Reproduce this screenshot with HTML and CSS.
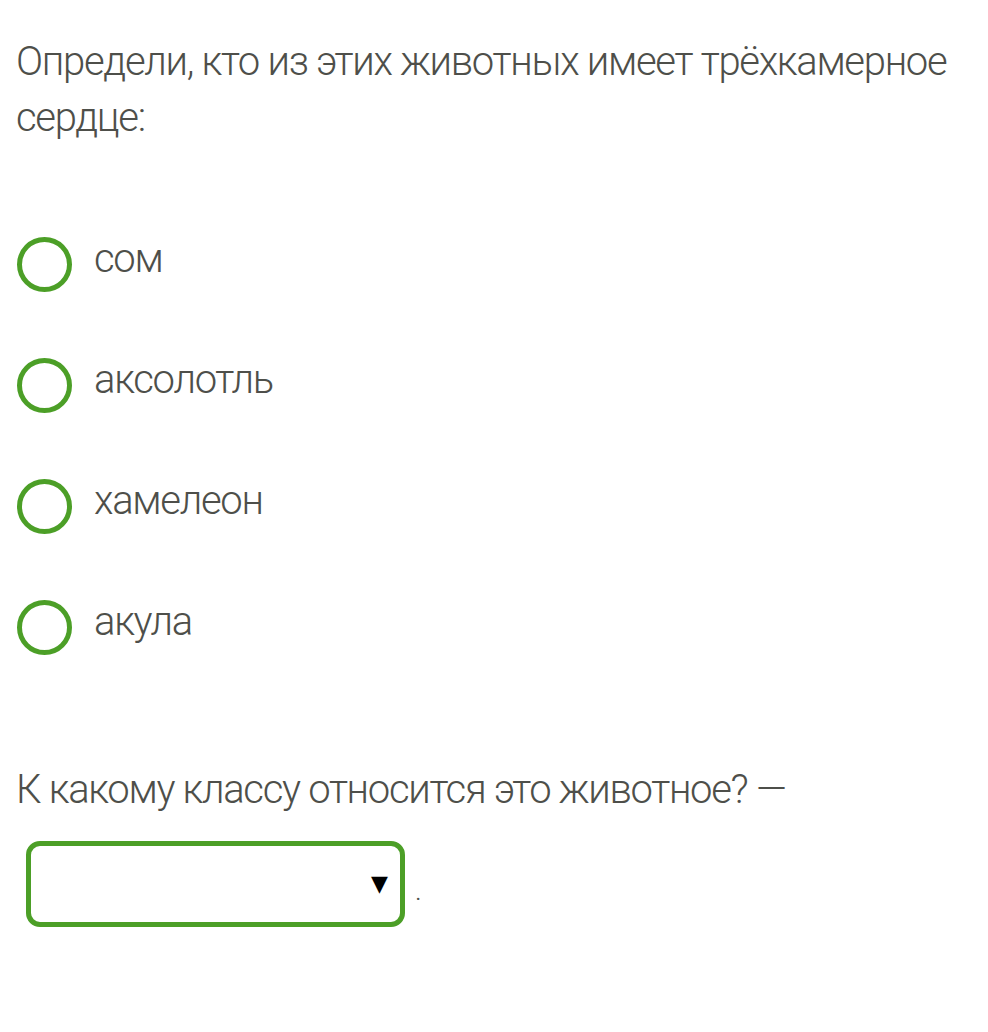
FILE: index.html
```html
<!DOCTYPE html>
<html lang="ru">
<head>
<meta charset="utf-8">
<link rel="stylesheet" href="styles.css">
</head>
<body>
<main class="page">
  <p class="question">Определи, кто из этих животных имеет трёхкамерное сердце:</p>
  <ul class="options">
    <li class="option"><span class="radio"></span><span class="label">сом</span></li>
    <li class="option"><span class="radio"></span><span class="label">аксолотль</span></li>
    <li class="option"><span class="radio"></span><span class="label">хамелеон</span></li>
    <li class="option"><span class="radio"></span><span class="label">акула</span></li>
  </ul>
  <p class="question second">К какому классу относится это животное? —</p>
  <div class="answer">
    <div class="select"><span class="arrow">▼</span></div>
    <span class="dot">.</span>
  </div>
</main>
</body>
</html>
```

FILE: styles.css
```css
html, body {
  margin: 0;
  padding: 0;
  background: #ffffff;
}

.page {
  padding: 34px 16px 0 16px;
  font-family: Roboto, "Noto Sans", sans-serif;
  font-weight: 300;
  font-size: 40px;
  line-height: 56px;
  letter-spacing: -1.3px;
  color: #4e4f4a;
}

.question {
  margin: 0;
}

.options {
  list-style: none;
  margin: 85px 0 0 0;
  padding: 0;
  display: flex;
  flex-direction: column;
  gap: 65px;
}

.option {
  display: flex;
  align-items: flex-start;
  height: 56px;
}

.radio {
  box-sizing: border-box;
  width: 55px;
  height: 55px;
  margin: 6px 0 0 1px;
  border: 5px solid #4c9f27;
  border-radius: 50%;
  flex: none;
}

.label {
  margin-left: 22px;
}

.second {
  margin-top: 112px;
}

.answer {
  display: flex;
  align-items: flex-end;
  margin-top: 23px;
  margin-left: 10px;
}

.select {
  box-sizing: border-box;
  width: 379px;
  height: 86px;
  border: 5px solid #4c9f27;
  border-radius: 14px;
  display: flex;
  align-items: center;
  justify-content: flex-end;
  padding-right: 12px;
}

.arrow {
  font-family: "DejaVu Sans", sans-serif;
  font-size: 22px;
  line-height: 1;
  letter-spacing: 0;
  color: #000000;
  font-weight: 400;
}

.dot {
  font-size: 28px;
  line-height: 24px;
  margin-left: 10px;
  margin-bottom: 24px;
}
```
